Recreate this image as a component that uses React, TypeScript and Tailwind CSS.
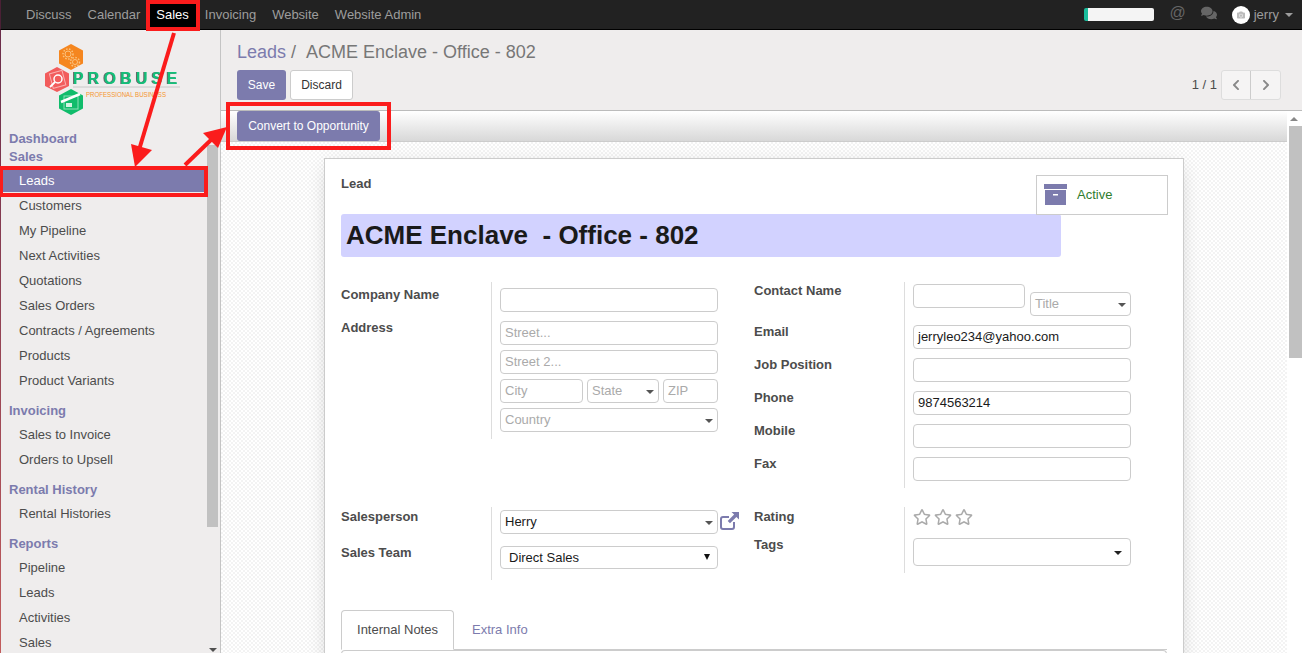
import { FaChevronLeft, FaChevronRight, FaComments, FaRegStar, FaCamera } from 'react-icons/fa';

const menuSections = [
  { title: 'Invoicing', items: ['Sales to Invoice', 'Orders to Upsell'] },
  { title: 'Rental History', items: ['Rental Histories'] },
  { title: 'Reports', items: ['Pipeline', 'Leads', 'Activities', 'Sales'] },
];

const salesItems = ['Customers', 'My Pipeline', 'Next Activities', 'Quotations', 'Sales Orders', 'Contracts / Agreements', 'Products', 'Product Variants'];

function Caret({ className = 'right-[4px] border-x-[4px] border-t-[4px] border-t-[#555] -translate-y-[1px]' }: { className?: string }) {
  return <span className={`absolute top-1/2 border-x-transparent ${className}`} />;
}

function Field({ value, placeholder, caret, className = '' }: { value?: string; placeholder?: string; caret?: boolean; className?: string }) {
  return (
    <div className={`relative flex h-[24px] items-center rounded-[4px] border border-[#ccc] bg-white px-[4px] ${className}`}>
      {value ? <span className="text-[#1a1a1a]">{value}</span> : <span className="text-[#aaa]">{placeholder}</span>}
      {caret && <Caret />}
    </div>
  );
}

function Label({ children, className = '' }: { children: string; className?: string }) {
  return <div className={`font-bold text-[#4c4c4c] ${className}`}>{children}</div>;
}

function Logo() {
  return (
    <svg width="150" height="75" viewBox="0 0 150 75" className="ml-[43px]">
      <polygon points="27,0 39,6.5 39,19.5 27,26 15,19.5 15,6.5" fill="#f5861f" />
      <circle cx="24" cy="10" r="3" fill="none" stroke="#fbc37f" strokeWidth="1" />
      <circle cx="24" cy="10" r="5" fill="none" stroke="#fbc37f" strokeWidth="1.5" strokeDasharray="1.5 1.5" />
      <circle cx="31" cy="18" r="2.5" fill="none" stroke="#fbc37f" strokeWidth="1" />
      <circle cx="31" cy="18" r="4.5" fill="none" stroke="#fbc37f" strokeWidth="1.5" strokeDasharray="1.5 1.5" />
      <polygon points="13,23 25,29.5 25,42 13,48 1,42 1,29.5" fill="#f25c5c" />
      <rect x="7" y="28" width="13" height="15" fill="none" stroke="#f9b0b0" transform="rotate(-15 13 35)" />
      <circle cx="14" cy="35" r="4" fill="none" stroke="#fff" strokeWidth="1.5" />
      <line x1="11" y1="38" x2="6" y2="43" stroke="#fff" strokeWidth="1.8" />
      <polygon points="27,45 39,51.5 39,64.5 27,71 15,64.5 15,51.5" fill="#10bc6b" />
      <rect x="20" y="52" width="14" height="13" fill="none" stroke="#8be0b8" />
      <line x1="17" y1="58" x2="36" y2="50" stroke="#fff" strokeWidth="2.5" />
      <rect x="22" y="59" width="6" height="4" fill="#d3f3e3" />
      <text x="29" y="40" fontFamily="'Liberation Sans', sans-serif" fontSize="16" fontWeight="700" letterSpacing="4.2" fill="#13c07a" className="[filter:drop-shadow(-0.5px_0.5px_0_#666)]">PROBUSE</text>
      <line x1="29" y1="43" x2="136" y2="43" stroke="#c8c8c8" />
      <text x="42" y="53" fontFamily="'Liberation Sans', sans-serif" fontSize="7.5" textLength="80" lengthAdjust="spacingAndGlyphs" fill="#f5962f">PROFESSIONAL BUSINESS</text>
    </svg>
  );
}

function Sidebar() {
  return (
    <aside className="relative flex h-full w-[221px] shrink-0 border-r border-[#c4c4c4] bg-[#efeded]">
      <div className="w-[1px] shrink-0 bg-gradient-to-b from-[#6b2c4a] to-[#c25c5c]" />
      <div className="w-[206px] shrink-0">
        <div className="h-[100px] pt-[14px]">
          <Logo />
        </div>
        <div className="pl-[8px] font-bold leading-[18px] text-[#7c7bad]">
          <div>Dashboard</div>
          <div>Sales</div>
        </div>
        <div className="ml-[2px] mt-[3px] h-[23px] w-[201px] bg-[#7c7bad] pl-[16px] leading-[23px] text-white">Leads</div>
        <div className="pt-[1px]">
          {salesItems.map((item) => (
            <div key={item} className="h-[25px] pl-[18px] leading-[25px] text-[#4c4c4c]">{item}</div>
          ))}
        </div>
        {menuSections.map((section) => (
          <div key={section.title}>
            <div className="pb-[2px] pl-[8px] pt-[8px] font-bold leading-[19px] text-[#7c7bad]">{section.title}</div>
            <div>
              {section.items.map((item) => (
                <div key={item} className="h-[25px] pl-[18px] leading-[25px] text-[#4c4c4c]">{item}</div>
              ))}
            </div>
          </div>
        ))}
      </div>
      <div className="relative w-[11px] shrink-0">
        <div className="mt-[115px] h-[382px] bg-[#c1c1c1]" />
        <span className="absolute bottom-[1px] left-[2px] border-x-[4px] border-t-[4px] border-x-transparent border-t-[#505050]" />
      </div>
    </aside>
  );
}

function ControlPanel() {
  return (
    <div className="h-[81px] border-b border-[#bbb] bg-[#efeded] pl-[16px] pr-[21px]">
      <div className="pt-[11px] text-[18px] leading-[22px] text-[#777]">
        <span className="text-[#7c7bad]">Leads</span> /<span className="ml-[10px]">ACME Enclave - Office - 802</span>
      </div>
      <div className="mt-[7px] flex items-center">
        <button className="h-[30px] w-[49px] rounded-[3px] bg-[#7c7bad] text-[12px] text-white">Save</button>
        <button className="ml-[4px] h-[30px] w-[63px] rounded-[3px] border border-[#ccc] bg-white text-[12px] text-[#333]">Discard</button>
        <div className="ml-auto flex items-center text-[#4c4c4c]">
          <span>1 / 1</span>
          <div className="ml-[4px] flex h-[30px] rounded-[3px] border border-[#ddd] bg-[#f5f4f4] text-[#888]">
            <div className="flex w-[29px] items-center justify-center border-r border-[#ccc]"><FaChevronLeft size={12} /></div>
            <div className="flex w-[29px] items-center justify-center"><FaChevronRight size={12} /></div>
          </div>
        </div>
      </div>
    </div>
  );
}

function LeadForm() {
  return (
    <div className="ml-[103px] w-[860px] border border-[#ccc] bg-white px-[16px] pt-[16px] shadow-[0_5px_20px_-5px_rgba(0,0,0,0.2)]">
      <div className="flex justify-between">
        <Label className="-mt-[1px]">Lead</Label>
        <div className="-mr-[1px] flex h-[40px] w-[132px] items-center border border-[#ccc] pl-[7px] text-[#2f7d2f]">
          <svg width="23" height="21" viewBox="0 0 23 21" className="-translate-y-[1px]">
            <rect x="0" y="0" width="23" height="5" fill="#7c7bad" />
            <rect x="1" y="6" width="21" height="15" fill="#7c7bad" />
            <rect x="9" y="10" width="5" height="1.5" fill="#fff" />
          </svg>
          <span className="ml-[10px]">Active</span>
        </div>
      </div>
      <div className="-mt-[1px] h-[43px] w-[720px] rounded-[3px] bg-[#d2d2ff] pl-[5px] text-[26px] font-bold leading-[42px] whitespace-pre text-[#1a1a1a]">ACME Enclave  - Office - 802</div>

      <div className="mt-[25px] flex">
        <div className="flex h-[157px] w-[413px] items-start">
          <div className="w-[150px] pt-[5px]">
            <Label className="leading-[15px]">Company Name</Label>
            <Label className="mt-[18px] leading-[15px]">Address</Label>
          </div>
          <div className="flex h-full flex-col gap-[5px] border-l border-[#ddd] pl-[8px] pt-[6px]">
            <Field className="mb-[4px] w-[218px]" />
            <Field className="w-[218px]" placeholder="Street..." />
            <Field className="w-[218px]" placeholder="Street 2..." />
            <div className="flex gap-[4px]">
              <Field className="w-[83px]" placeholder="City" />
              <Field className="w-[72px]" placeholder="State" caret />
              <Field className="w-[55px]" placeholder="ZIP" />
            </div>
            <Field className="w-[218px]" placeholder="Country" caret />
          </div>
        </div>
        <div className="flex h-[206px] items-start">
          <div className="w-[150px]">
            <Label className="pt-[1px] leading-[15px]">Contact Name</Label>
            <Label className="mt-[18px] pt-[8px] leading-[15px]">Email</Label>
            <Label className="mt-[18px] leading-[15px]">Job Position</Label>
            <Label className="mt-[18px] leading-[15px]">Phone</Label>
            <Label className="mt-[18px] leading-[15px]">Mobile</Label>
            <Label className="mt-[18px] leading-[15px]">Fax</Label>
          </div>
          <div className="h-full border-l border-[#ddd] pl-[8px] pt-[2px]">
            <div className="flex items-start gap-[5px]">
              <Field className="w-[112px]" />
              <Field className="mt-[8px] w-[101px]" placeholder="Title" caret />
            </div>
            <div className="mt-[9px] flex flex-col gap-[9px]">
              <Field className="w-[218px]" value="jerryleo234@yahoo.com" />
              <Field className="w-[218px]" />
              <Field className="w-[218px]" value="9874563214" />
              <Field className="w-[218px]" />
              <Field className="w-[218px]" />
            </div>
          </div>
        </div>
      </div>

      <div className="mt-[19px] flex">
        <div className="flex h-[73px] w-[413px] items-start">
          <div className="w-[150px] pt-[2px]">
            <Label className="leading-[15px]">Salesperson</Label>
            <Label className="mt-[21px] leading-[15px]">Sales Team</Label>
          </div>
          <div className="h-full border-l border-[#ddd] pl-[8px] pt-[3px]">
            <div className="flex items-center">
              <Field className="w-[218px]" value="Herry" caret />
              {/* external link icon */}
              <svg width="19" height="18" viewBox="0 0 19 18" className="ml-[2px] -translate-y-[1px] text-[#7c7bad]">
                <path d="M14 10v5a2 2 0 0 1-2 2H3a2 2 0 0 1-2-2V7a2 2 0 0 1 2-2h6" fill="none" stroke="currentColor" strokeWidth="2" />
                <path d="M11.5 0H19v7.5l-2.6-2.6-6.4 6.4-2.3-2.3 6.4-6.4z" fill="currentColor" />
              </svg>
            </div>
            <div className="relative mt-[12px] flex h-[23px] w-[218px] items-center rounded-[4px] border border-[#ccc] pl-[8px] text-[#1a1a1a]">
              Direct Sales
              <Caret className="right-[7px] -translate-y-[4px] border-x-[3px] border-t-[6px] border-t-[#111]" />
            </div>
          </div>
        </div>
        <div className="flex h-[66px] items-start">
          <div className="w-[150px] pt-[2px]">
            <Label className="leading-[15px]">Rating</Label>
            <Label className="mt-[13px] leading-[15px]">Tags</Label>
          </div>
          <div className="h-full border-l border-[#ddd] pl-[8px] pt-[1px]">
            <div className="flex h-[18px] items-center gap-[3px] text-[#aaa]">
              <FaRegStar size={18} />
              <FaRegStar size={18} />
              <FaRegStar size={18} />
            </div>
            <div className="relative mt-[12px] h-[28px] w-[218px] rounded-[4px] border border-[#ccc]">
              <Caret className="right-[8px] -translate-y-[1px] border-x-[4px] border-t-[4px] border-t-[#222]" />
            </div>
          </div>
        </div>
      </div>

      <div className="mt-[30px] flex h-[40px] border-b border-[#ccc]">
        <div className="z-10 flex h-[40px] w-[113px] items-center justify-center rounded-t-[4px] border border-[#ccc] border-b-white text-[#4c4c4c]">Internal Notes</div>
        <div className="ml-[18px] flex h-[40px] items-center text-[#7c7bad]">Extra Info</div>
      </div>
      <div className="h-[60px] rounded-t-[4px] border-x border-t border-[#ccc]" />
    </div>
  );
}

export default function App() {
  return (
    <div className="relative h-[653px] w-[1302px] overflow-hidden bg-white font-['Liberation_Sans',sans-serif] text-[13px]">
      <nav className="flex h-[30px] items-center border-b border-l border-black border-l-[#4a2035] bg-[#222] pl-[17px] pr-[9px] text-[#9d9d9d]">
        {['Discuss', 'Calendar', 'Sales', 'Invoicing', 'Website', 'Website Admin'].map((item) => (
          <div key={item} className={`flex h-[29px] items-center px-[8px] ${item === 'Sales' ? 'bg-black text-white' : ''}`}>{item}</div>
        ))}
        <div className="ml-auto flex items-center">
          <div className="h-[13px] w-[70px] rounded-[2px] border-l-[4px] border-l-[#1abc9c] bg-[#f4f4f4]" />
          <span className="ml-[15px] -translate-y-[2px] text-[16px] leading-none text-[#666]">@</span>
          <FaComments size={16} className="ml-[15px] -translate-y-[2px] text-[#666]" />
          <div className="ml-[15px] flex h-[18px] w-[18px] items-center justify-center rounded-full bg-white">
            <FaCamera size={8} className="text-[#bbb]" />
          </div>
          <span className="ml-[4px]">jerry</span>
          <span className="ml-[6px] border-x-[4px] border-t-[4px] border-x-transparent border-t-[#9d9d9d]" />
        </div>
      </nav>

      <div className="flex h-[623px]">
        <Sidebar />
        <main className="flex min-w-0 flex-1 flex-col">
          <ControlPanel />
          <div className="flex min-h-0 flex-1">
            <div className="flex min-w-0 flex-1 flex-col">
              <div className="h-[31px] shrink-0 border-b border-[#ccc] bg-gradient-to-b from-white to-[#d8d8d8] pl-[16px]">
                <button className="h-[30px] w-[143px] rounded-[3px] bg-[#7c7bad] text-[12px] text-white">Convert to Opportunity</button>
              </div>
              <div className="min-h-0 flex-1 overflow-hidden bg-[repeating-conic-gradient(#f3f3f3_0%_25%,#fff_0%_50%)] bg-[length:4px_4px] pt-[16px]">
                <LeadForm />
              </div>
            </div>
            <div className="relative w-[15px] shrink-0 bg-white">
              <span className="absolute left-[3px] top-[6px] border-x-[4px] border-b-[4px] border-x-transparent border-b-[#888]" />
              <div className="ml-[2px] mt-[15px] h-[232px] w-[13px] bg-[#c1c1c1]" />
            </div>
          </div>
        </main>
      </div>

      {/* red annotations drawn on top of the screenshot */}
      <div className="absolute left-[146px] top-0 h-[31px] w-[54px] border-[4px] border-[#fb1c1c]" />
      <div className="absolute left-0 top-[166px] h-[31px] w-[208px] border-[4px] border-l-[3px] border-[#fb1c1c]" />
      <div className="absolute left-[226px] top-[102px] h-[48px] w-[165px] border-[4px] border-[#fb1c1c]" />
      <svg className="pointer-events-none absolute inset-0" width="1302" height="653">
        <line x1="174" y1="33" x2="139" y2="150" stroke="#fb1c1c" strokeWidth="4" />
        <polygon points="131,144 152,150 135,167" fill="#fb1c1c" />
        <line x1="185" y1="165" x2="213" y2="138" stroke="#fb1c1c" strokeWidth="4" />
        <polygon points="227,127 203,133 218,148" fill="#fb1c1c" />
      </svg>
    </div>
  );
}
